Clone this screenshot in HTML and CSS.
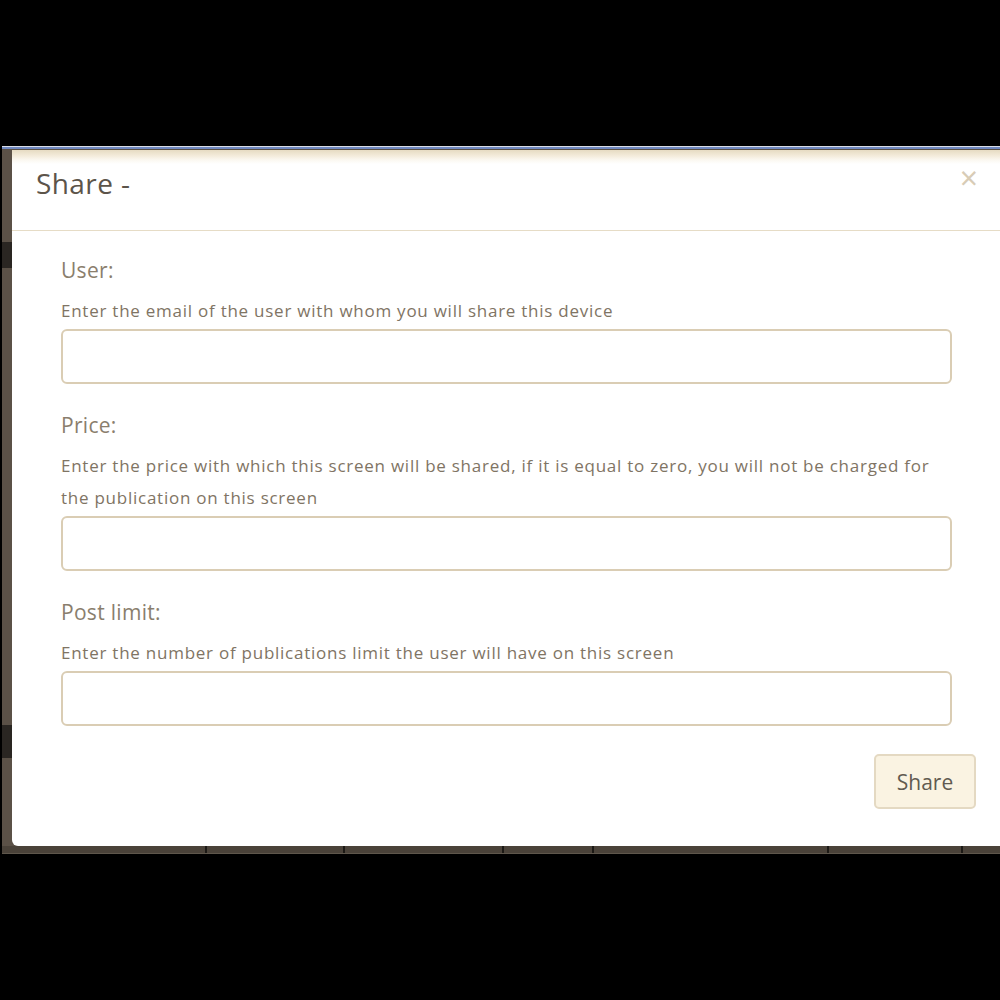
FILE: index.html
```html
<!DOCTYPE html>
<html lang="en">
<head>
<meta charset="utf-8">
<title>Share</title>
<link rel="stylesheet" href="styles.css">
</head>
<body>
<div class="frame">
  <div class="screen">
    <div class="backdrop-edge"></div>
    <div class="modal">
      <div class="modal-header">
        <h4 class="modal-title">Share -</h4>
        <span class="close">&times;</span>
      </div>
      <form class="modal-body">
        <div class="field">
          <label class="field-label">User:</label>
          <p class="field-help">Enter the email of the user with whom you will share this device</p>
          <input class="field-input" type="text">
        </div>
        <div class="field">
          <label class="field-label">Price:</label>
          <p class="field-help">Enter the price with which this screen will be shared, if it is equal to zero, you will not be charged for the publication on this screen</p>
          <input class="field-input" type="text">
        </div>
        <div class="field">
          <label class="field-label">Post limit:</label>
          <p class="field-help">Enter the number of publications limit the user will have on this screen</p>
          <input class="field-input" type="text">
        </div>
        <div class="modal-footer">
          <button class="btn" type="button">Share</button>
        </div>
      </form>
    </div>
  </div>
  <div class="table-edge">
    <span class="col c1"></span><span class="col c2"></span><span class="col c3"></span><span class="col c4"></span><span class="col c5"></span><span class="col c6"></span><span class="col c7"></span>
  </div>
</div>
</body>
</html>
```

FILE: styles.css
```css
html, body {
  margin: 0;
  padding: 0;
  background: #000;
  height: 1000px;
  overflow: hidden;
  font-family: "Open Sans", "Noto Sans", sans-serif;
}

.frame {
  padding-top: 146px;
}

.screen {
  display: flex;
  margin-left: 2px;
  border-top: 1px solid #d9dde6;
  background: #5b5147;
  box-shadow: inset 0 2px 0 #7088bf;
}

.backdrop-edge {
  width: 10px;
  flex: none;
  background:
    linear-gradient(to bottom,
      #5b5147 0, #5b5147 92px,
      #2a2622 92px, #2a2622 118px,
      #5b5147 118px, #5b5147 575px,
      #2a2622 575px, #2a2622 608px,
      #5b5147 608px);
  margin-top: 3px;
}

.modal {
  flex: 1;
  background: #fff;
  margin-top: 3px;
  border-bottom-left-radius: 6px;
}

.modal-header {
  position: relative;
  height: 81px;
  border-bottom: 1px solid #e6dcc6;
  background: linear-gradient(to bottom, #e6dbc2 0, #f4ecdc 6px, #fbf8f1 10px, #fff 14px);
  box-sizing: border-box;
  padding: 16px 0 0 24px;
}

.modal-title {
  margin: 0;
  font-size: 28px;
  font-weight: 400;
  color: #5c544a;
  line-height: 34px;
  letter-spacing: 0.4px;
}

.close {
  position: absolute;
  right: 22px;
  top: 12px;
  font-size: 32px;
  line-height: 32px;
  color: #d8ccb6;
}

.modal-body {
  padding: 26px 48px 37px 49px;
  margin: 0;
}

.field {
  margin-bottom: 28px;
}

.field:last-of-type {
  margin-bottom: 27px;
}

.field-label {
  display: block;
  font-size: 21px;
  line-height: 26px;
  color: #8a7e6d;
  margin-bottom: 12px;
  letter-spacing: 0.3px;
}

.field-help {
  margin: 0 0 2px 0;
  font-size: 17px;
  line-height: 32px;
  color: #7f7464;
  letter-spacing: 0.75px;
}

.field-input {
  display: block;
  width: 100%;
  box-sizing: border-box;
  height: 55px;
  border: 2px solid #dacdb4;
  border-radius: 6px;
  background: #fff;
  outline: none;
}

.modal-footer {
  display: flex;
  justify-content: flex-end;
  margin-right: -24px;
}

.btn {
  width: 102px;
  height: 55px;
  background: #faf3e2;
  border: 2px solid #e4d9c2;
  border-radius: 5px;
  font-family: "Open Sans", "Noto Sans", sans-serif;
  font-size: 21px;
  color: #615a50;
  cursor: pointer;
  padding: 0;
}

.table-edge {
  display: flex;
  margin-left: 2px;
  height: 7px;
  background: #4a4239;
  border-bottom: 1px solid #5f574c;
}

.col {
  border-right: 2px solid #1c1915;
}

.c1 { width: 203px; }
.c2 { width: 136px; }
.c3 { width: 157px; }
.c4 { width: 88px; }
.c5 { width: 233px; }
.c6 { width: 132px; }
.c7 { width: 10px; border-right: none; }
```
